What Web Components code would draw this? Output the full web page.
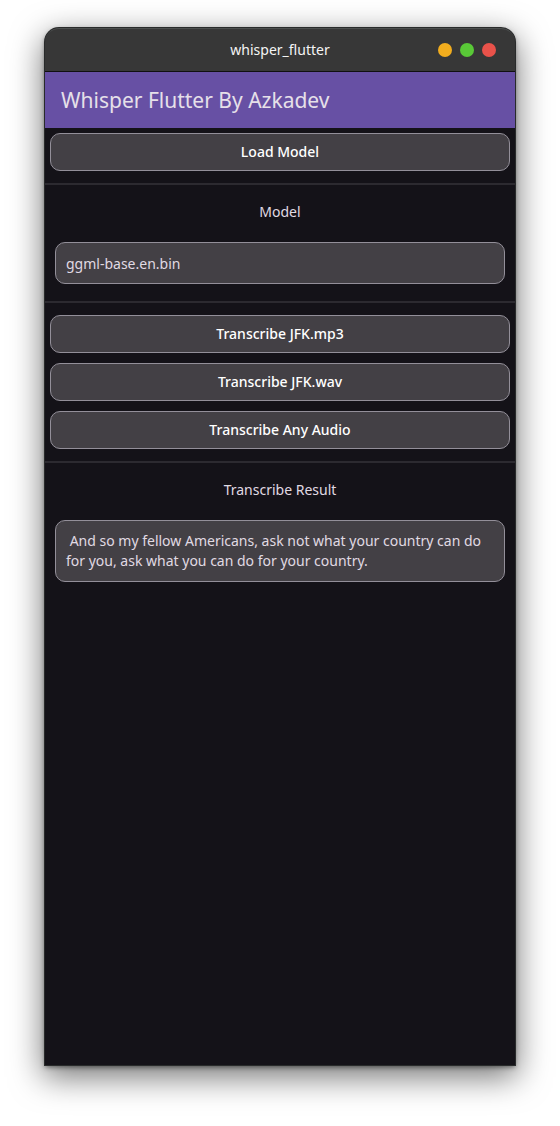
<!DOCTYPE html>
<html lang="en">
<head>
<meta charset="utf-8">
<meta name="viewport" content="width=device-width, initial-scale=1">
<title>whisper_flutter</title>
<style>
  body { margin: 0; background: #fff; font-family: "Noto Sans", "Open Sans", sans-serif; font-size: 14px; line-height: 20px; }
</style>
</head>
<body>
<app-window caption="whisper_flutter">
  <app-bar>Whisper Flutter By Azkadev</app-bar>
  <action-button>Load Model</action-button>
  <section-divider></section-divider>
  <text-panel label="Model" value="ggml-base.en.bin"></text-panel>
  <section-divider></section-divider>
  <action-button>Transcribe JFK.mp3</action-button>
  <action-button>Transcribe JFK.wav</action-button>
  <action-button>Transcribe Any Audio</action-button>
  <section-divider></section-divider>
  <text-panel multiline label="Transcribe Result" value=" And so my fellow Americans, ask not what your country can do for you, ask what you can do for your country."></text-panel>
</app-window>

<script>
class AppWindow extends HTMLElement {
  connectedCallback() {
    const root = this.attachShadow({ mode: "open" });
    root.innerHTML = `
      <style>
        :host { display: block; padding: 28px 45px 61px; }
        .frame {
          display: flex; flex-direction: column; box-sizing: border-box;
          min-height: calc(100vh - 89px);
          background: #141218; border-radius: 14px 14px 0 0;
          box-shadow: 0 0 0 1px #292b2b, 0 2px 5px rgba(0,0,0,.5), 0 10px 32px 2px rgba(0,0,0,.54);
        }
        header {
          display: grid; grid-template-columns: 1fr auto 1fr; align-items: center;
          height: 44px; box-sizing: border-box; padding: 0 19px;
          background: #373737; color: #f4f4f4;
          border-top: 1px solid #4c4f4e; border-bottom: 1px solid #101010;
          border-radius: 14px 14px 0 0;
        }
        h1 { grid-column: 2; margin: 0; font-size: 14px; line-height: 20px; font-weight: 400; }
        nav { display: flex; gap: 8px; justify-content: flex-end; }
        button { width: 14px; height: 14px; padding: 0; border: 0; border-radius: 50%; }
        .min { background: #f2ad1e; }
        .max { background: #59c837; }
        .close { background: #e9524a; }
        main { display: block; flex: 1; }
      </style>
      <div class="frame">
        <header>
          <h1></h1>
          <nav aria-label="Window">
            <button class="min" aria-label="Minimize"></button>
            <button class="max" aria-label="Maximize"></button>
            <button class="close" aria-label="Close"></button>
          </nav>
        </header>
        <main><slot></slot></main>
      </div>`;
    root.querySelector("h1").textContent = this.getAttribute("caption");
  }
}

class AppBar extends HTMLElement {
  connectedCallback() {
    this.attachShadow({ mode: "open" }).innerHTML = `
      <style>
        :host { display: block; padding: 14px 16px; background: #6750a4; color: #e6e0e9; }
        h2 { margin: 0; font-size: 21px; line-height: 28px; font-weight: 400; }
      </style>
      <h2><slot></slot></h2>`;
  }
}

class ActionButton extends HTMLElement {
  connectedCallback() {
    this.attachShadow({ mode: "open" }).innerHTML = `
      <style>
        :host { display: block; padding: 5px; }
        button {
          display: block; width: 100%; box-sizing: border-box; height: 38px; padding: 0 10px;
          font: inherit; font-weight: 500; color: #fff;
          background: #434045; border: 1px solid #938f99; border-radius: 10px;
        }
      </style>
      <button type="button"><slot></slot></button>`;
  }
}

class SectionDivider extends HTMLElement {
  connectedCallback() {
    this.attachShadow({ mode: "open" }).innerHTML = `
      <style>
        :host { display: block; padding: 7px 0; }
        hr { height: 2px; margin: 0; border: 0; background: #2c2a30; }
      </style>
      <hr>`;
  }
}

class TextPanel extends HTMLElement {
  connectedCallback() {
    const root = this.attachShadow({ mode: "open" });
    const control = this.hasAttribute("multiline")
      ? `<textarea id="field" rows="2" readonly></textarea>`
      : `<input id="field" type="text" readonly>`;
    root.innerHTML = `
      <style>
        :host { display: block; padding: 10px; color: #e0dae3; }
        label { display: block; margin-bottom: 20px; text-align: center; }
        input, textarea {
          display: block; width: 100%; box-sizing: border-box; margin: 0; padding: 10px;
          font: inherit; color: inherit; line-height: 20px;
          background: #434045; border: 1px solid #938f99; border-radius: 10px;
          outline: 0; resize: none; overflow: hidden; field-sizing: content;
        }
        input { height: 42px; }
      </style>
      <label for="field"></label>
      ${control}`;
    root.querySelector("label").textContent = this.getAttribute("label");
    root.getElementById("field").value = this.getAttribute("value");
  }
}

customElements.define("app-window", AppWindow);
customElements.define("app-bar", AppBar);
customElements.define("action-button", ActionButton);
customElements.define("section-divider", SectionDivider);
customElements.define("text-panel", TextPanel);
</script>
</body>
</html>
